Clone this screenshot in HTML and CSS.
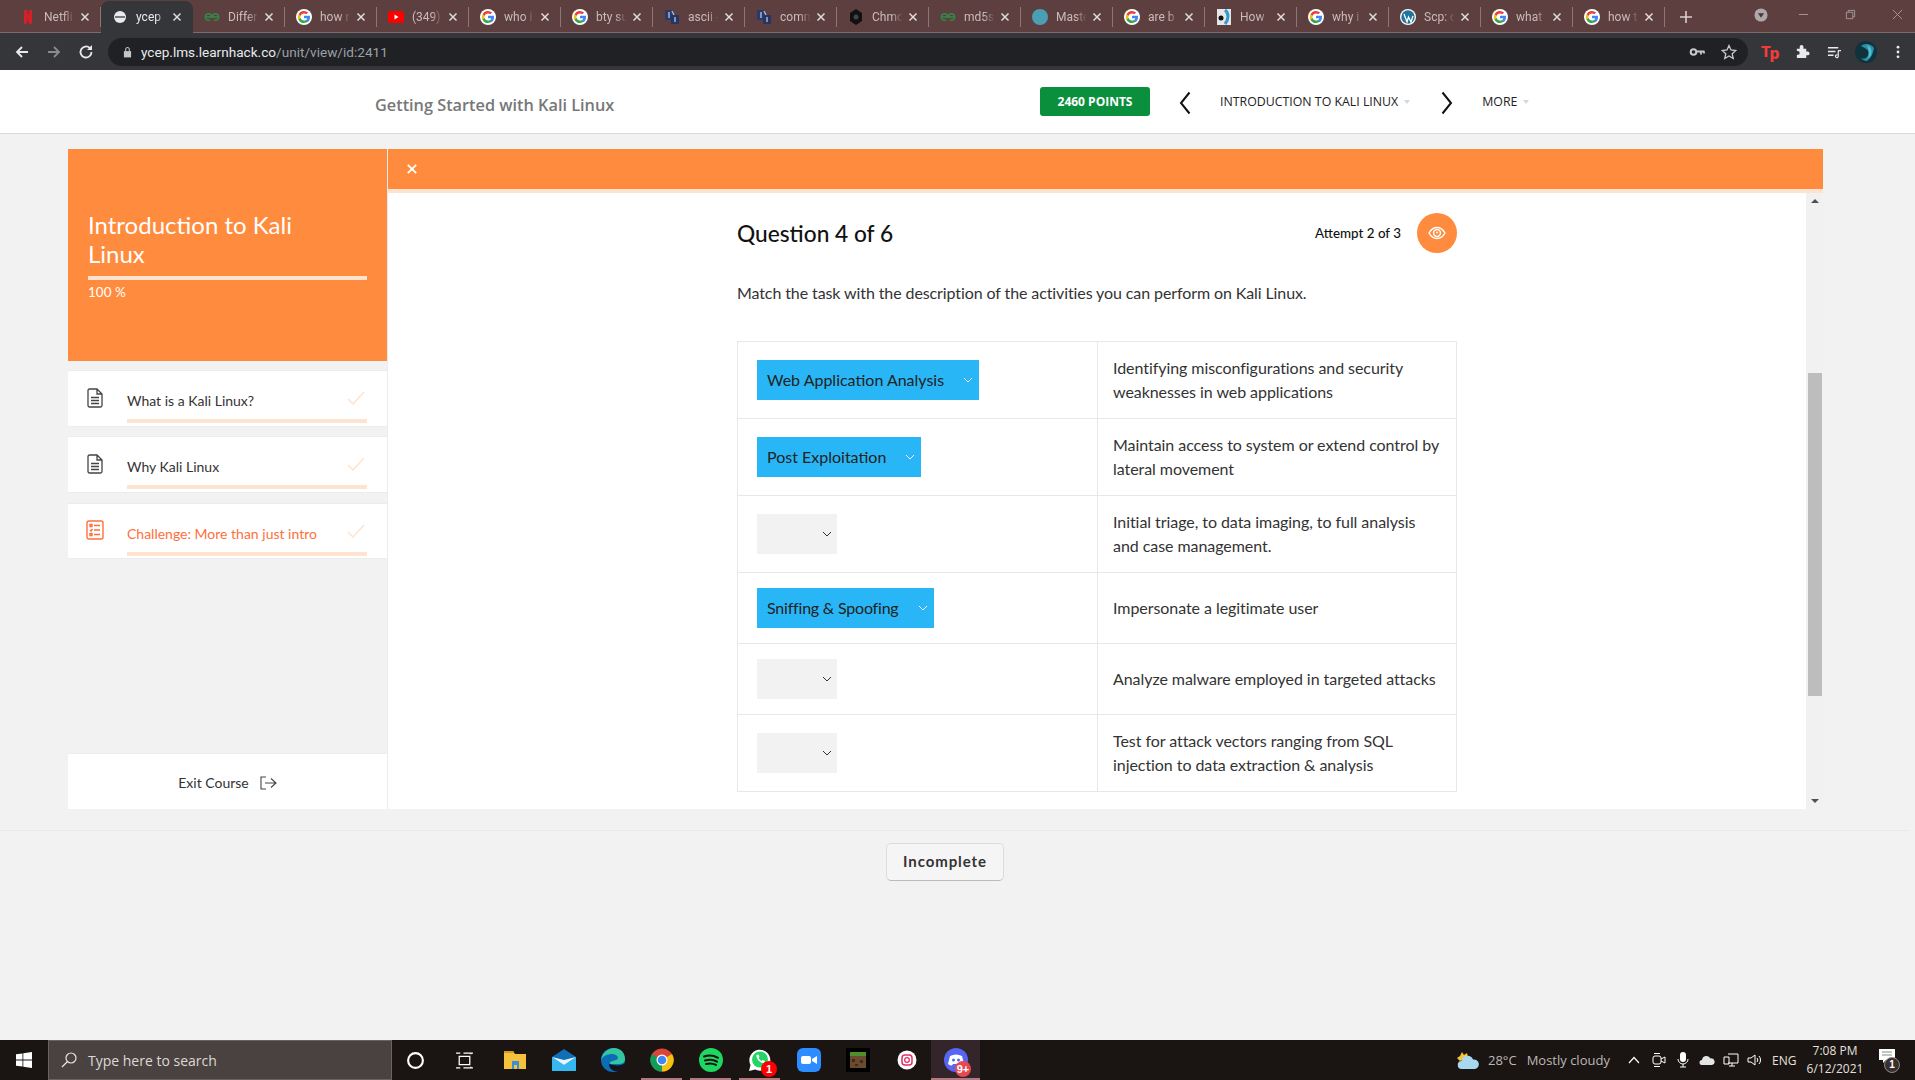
FILE: index.html
```html
<!DOCTYPE html>
<html lang="en">
<head>
  <meta charset="UTF-8" />
  <title>Getting Started with Kali Linux</title>
  <link rel="stylesheet" href="styles.css">
</head>
<body>
  <svg class="defs" width="0" height="0">
    <symbol id="g" viewBox="0 0 24 24">
      <circle cx="12" cy="12" r="12" fill="#fff"/>
      <path d="M21 12.2c0-.7-.1-1.300-.2-1.900H12v3.600h5a4.300 4.300 0 0 1-1.900 2.800v2.300h3C20 17.400 21 15 21 12.200z" fill="#4285f4"/>
      <path d="M12 21c2.500 0 4.600-.8 6.100-2.200l-3-2.300c-.8.600-1.900.9-3.100.9-2.400 0-4.400-1.600-5.100-3.800H3.800v2.400A9 9 0 0 0 12 21z" fill="#34a853"/>
      <path d="M6.900 13.600a5.400 5.400 0 0 1 0-3.400V7.800H3.800a9 9 0 0 0 0 8.200z" fill="#fbbc05"/>
      <path d="M12 6.600c1.300 0 2.500.5 3.500 1.400l2.600-2.600A9 9 0 0 0 3.800 7.800l3.100 2.400C7.600 8.100 9.600 6.600 12 6.600z" fill="#ea4335"/>
    </symbol>
    <symbol id="gfg" viewBox="0 0 16 16">
      <path d="M8 8C7 5 5 4.500 3.500 5S1 7 1.500 9s3 3 4.500 1.500M8 8c1-3 3-3.500 4.500-3s2.500 2 2 4-3 3-4.500 1.500M1.500 8H14.500" fill="none" stroke="#2f8d46" stroke-width="1.400"/>
    </symbol>
    <symbol id="so" viewBox="0 0 16 16">
      <rect x="1" y="1" width="8" height="10" fill="#2b3a67"/>
      <rect x="7" y="6" width="8" height="9" fill="#26355f"/>
      <path d="M5 3v6M11 8v5M8 2l2 4" stroke="#9fb2dc" stroke-width="1.500"/>
    </symbol>
    <symbol id="doc" viewBox="0 0 16 20">
      <path d="M1 2.500A1.500 1.500 0 0 1 2.500 1H10l5 5v11.500a1.500 1.500 0 0 1-1.500 1.500h-11A1.500 1.500 0 0 1 1 17.500zM10 1v5h5M4 9.500h8M4 12.500h8M4 15.500h8" fill="none" stroke="#444" stroke-width="1.300"/>
    </symbol>
    <symbol id="tick" viewBox="0 0 18 14">
      <path d="M1 8l5 5L17 1" fill="none" stroke="#fde3d0" stroke-width="1.500"/>
    </symbol>
    <symbol id="down" viewBox="0 0 10 6">
      <path d="M1 1l4 4 4-4" fill="none" stroke="currentColor" stroke-width="1"/>
    </symbol>
    <symbol id="x" viewBox="0 0 10 10">
      <path d="M1.500 1.500l7 7M8.500 1.500l-7 7" fill="none" stroke="currentColor" stroke-width="1.500"/>
    </symbol>
  </svg>

  <div class="tabstrip">
    <div class="tab"><svg class="fav" viewBox="0 0 16 16"><path d="M4 1h3l2 7V1h3v14l-3-.4L7 8v6.500l-3 .5z" fill="#d81f26"/></svg><span class="tab-name">Netfli</span><svg class="tab-x"><use href="#x"/></svg></div>
    <div class="tab tab-active"><svg class="fav" viewBox="0 0 16 16"><circle cx="8" cy="8" r="6" fill="#e8eaed"/><rect x="3" y="7" width="10" height="2" fill="#777"/></svg><span class="tab-name">ycep</span><svg class="tab-x"><use href="#x"/></svg></div>
    <div class="tab"><svg class="fav"><use href="#gfg"/></svg><span class="tab-name">Differ</span><svg class="tab-x"><use href="#x"/></svg></div>
    <div class="tab"><svg class="fav"><use href="#g"/></svg><span class="tab-name">how r</span><svg class="tab-x"><use href="#x"/></svg></div>
    <div class="tab"><svg class="fav" viewBox="0 0 16 16"><rect x="0" y="2" width="16" height="12" rx="3" fill="#f00"/><path d="M6.500 5.500v5l4-2.500z" fill="#fff"/></svg><span class="tab-name">(349)</span><svg class="tab-x"><use href="#x"/></svg></div>
    <div class="tab"><svg class="fav"><use href="#g"/></svg><span class="tab-name">who i</span><svg class="tab-x"><use href="#x"/></svg></div>
    <div class="tab"><svg class="fav"><use href="#g"/></svg><span class="tab-name">bty su</span><svg class="tab-x"><use href="#x"/></svg></div>
    <div class="tab"><svg class="fav"><use href="#so"/></svg><span class="tab-name">ascii -</span><svg class="tab-x"><use href="#x"/></svg></div>
    <div class="tab"><svg class="fav"><use href="#so"/></svg><span class="tab-name">comm</span><svg class="tab-x"><use href="#x"/></svg></div>
    <div class="tab"><svg class="fav" viewBox="0 0 16 16"><path d="M8 0l6 4v8l-6 4-6-4V4z" fill="#111"/><circle cx="8" cy="8" r="2.500" fill="#444"/></svg><span class="tab-name">Chmo</span><svg class="tab-x"><use href="#x"/></svg></div>
    <div class="tab"><svg class="fav"><use href="#gfg"/></svg><span class="tab-name">md5s</span><svg class="tab-x"><use href="#x"/></svg></div>
    <div class="tab"><svg class="fav" viewBox="0 0 16 16"><circle cx="8" cy="8" r="8" fill="#4b9fb5"/></svg><span class="tab-name">Maste</span><svg class="tab-x"><use href="#x"/></svg></div>
    <div class="tab"><svg class="fav"><use href="#g"/></svg><span class="tab-name">are b</span><svg class="tab-x"><use href="#x"/></svg></div>
    <div class="tab"><svg class="fav" viewBox="0 0 16 16"><rect x="1" y="0" width="14" height="16" fill="#e6e6e6"/><path d="M9 1c4 3 4 9 0 14" fill="none" stroke="#2e9ccf" stroke-width="3"/><circle cx="5" cy="9" r="2.500" fill="#111"/></svg><span class="tab-name">How</span><svg class="tab-x"><use href="#x"/></svg></div>
    <div class="tab"><svg class="fav"><use href="#g"/></svg><span class="tab-name">why i</span><svg class="tab-x"><use href="#x"/></svg></div>
    <div class="tab"><svg class="fav" viewBox="0 0 16 16"><circle cx="8" cy="8" r="8" fill="#fff"/><circle cx="8" cy="8" r="6.700" fill="#21759b"/><path d="M4 5l3 8 1.500-5L11 13l2-6" fill="none" stroke="#fff" stroke-width="1.300"/></svg><span class="tab-name">Scp: c</span><svg class="tab-x"><use href="#x"/></svg></div>
    <div class="tab"><svg class="fav"><use href="#g"/></svg><span class="tab-name">what</span><svg class="tab-x"><use href="#x"/></svg></div>
    <div class="tab"><svg class="fav"><use href="#g"/></svg><span class="tab-name">how t</span><svg class="tab-x"><use href="#x"/></svg></div>
    <svg class="newtab" viewBox="0 0 12 12"><path d="M6 0v12M0 6h12" stroke="#d8cfcf" stroke-width="1.600"/></svg>
    <div class="win-controls">
      <svg class="win-drop" viewBox="0 0 16 16"><circle cx="8" cy="8" r="7.500" fill="#b0a8a8"/><path d="M4.500 6h7L8 11z" fill="#4a3535"/></svg>
      <svg class="win-btn" viewBox="0 0 12 12"><path d="M1 6h10" stroke="#a89a9a"/></svg>
      <svg class="win-btn" viewBox="0 0 12 12"><path d="M1.500 3.500h7v7h-7zM3.500 3.500v-2h7v7h-2" fill="none" stroke="#a89a9a"/></svg>
      <svg class="win-btn" viewBox="0 0 12 12"><path d="M1 1l10 10M11 1L1 11" stroke="#a89a9a"/></svg>
    </div>
  </div>

  <div class="toolbar">
    <svg class="nav-icon" viewBox="0 0 16 16"><path d="M14 8H3M8 3L3 8l5 5" fill="none" stroke="#e8eaed" stroke-width="1.800"/></svg>
    <svg class="nav-icon" viewBox="0 0 16 16"><path d="M2 8h11M8 3l5 5-5 5" fill="none" stroke="#8a8b8d" stroke-width="1.800"/></svg>
    <svg class="nav-icon" viewBox="0 0 16 16"><path d="M13.500 8a5.500 5.500 0 1 1-1.600-3.900" fill="none" stroke="#e8eaed" stroke-width="1.800"/><path d="M14 1v5H9z" fill="#e8eaed"/></svg>
    <div class="omnibox">
      <svg class="lock" viewBox="0 0 10 12"><path d="M1 5h8v7H1z" fill="#c4c7c5"/><path d="M3 5V3a2 2 0 0 1 4 0v2" fill="none" stroke="#c4c7c5" stroke-width="1.200"/></svg>
      <span class="url"><b>ycep.lms.learnhack.co</b>/unit/view/id:2411</span>
      <svg class="omni-icon omni-key" viewBox="0 0 16 16"><circle cx="4.500" cy="8" r="2.800" fill="none" stroke="#c8c9cb" stroke-width="2"/><path d="M7 7.500h8.500M12 7.500v3M15 7.500v2" stroke="#c8c9cb" stroke-width="1.800"/></svg>
      <svg class="omni-icon" viewBox="0 0 16 16"><path d="M8 1.500l2 4.500 4.800.5-3.600 3.200 1 4.800L8 12l-4.200 2.500 1-4.800L1.200 6.500 6 6z" fill="none" stroke="#c8c9cb" stroke-width="1.300"/></svg>
    </div>
    <div class="extensions">
      <div class="ext ext-tp">T<span>p</span></div>
      <div class="ext"><svg viewBox="0 0 16 16"><path d="M2 5h3V3a2 2 0 0 1 4 0v2h3v3h1.500a2 2 0 0 1 0 4H12v3H2v-3.500h1a2 2 0 0 0 0-4H2z" fill="#e8eaed"/></svg></div>
      <div class="ext"><svg viewBox="0 0 16 16"><path d="M1 4h11M1 8h8M1 12h6" stroke="#e8eaed" stroke-width="1.500"/><path d="M12 7v6a1.500 1.500 0 1 1-1-1.400M12 7h3" fill="none" stroke="#e8eaed" stroke-width="1.300"/></svg></div>
      <div class="ext"><svg class="avatar" viewBox="0 0 22 22"><circle cx="11" cy="11" r="11" fill="#10323d"/><path d="M6 5c3-3 10-3 13 2-1 6-3 10-7 13-2 0-5-1-6-3 4 2 7-1 8-5 0-3-4-5-8-7z" fill="#2f8ea3"/><path d="M12 4c3 1 6 5 4 10l-3 4c1-5 1-9-1-14z" fill="#4cc0d4"/></svg></div>
      <div class="ext"><svg class="menu-dots" viewBox="0 0 4 16"><circle cx="2" cy="2.500" r="1.600" fill="#e8eaed"/><circle cx="2" cy="8" r="1.600" fill="#e8eaed"/><circle cx="2" cy="13.500" r="1.600" fill="#e8eaed"/></svg></div>
    </div>
  </div>

  <header class="course-bar">
    <h1 class="course-title">Getting Started with Kali Linux</h1>
    <div class="points">2460 POINTS</div>
    <svg class="unit-arrow unit-prev" viewBox="0 0 12 24"><path d="M10.500 1.500L2 12l8.500 10.500" fill="none" stroke="#111" stroke-width="2"/></svg>
    <span class="unit-link unit-name">INTRODUCTION TO KALI LINUX<i class="caret"></i></span>
    <svg class="unit-arrow unit-next" viewBox="0 0 12 24"><path d="M1.500 1.500L10 12 1.500 22.500" fill="none" stroke="#111" stroke-width="2"/></svg>
    <span class="unit-link">MORE<i class="caret"></i></span>
  </header>

  <div class="course-wrap">
    <aside class="sidebar">
      <div class="unit-card">
        <h2>Introduction to Kali Linux</h2>
        <div class="unit-progress"></div>
        <div class="unit-percent">100 %</div>
      </div>
      <div class="lesson">
        <svg class="lesson-icon"><use href="#doc"/></svg>
        <div class="lesson-body"><span>What is a Kali Linux?</span></div>
        <svg class="lesson-tick"><use href="#tick"/></svg>
      </div>
      <div class="lesson">
        <svg class="lesson-icon"><use href="#doc"/></svg>
        <div class="lesson-body"><span>Why Kali Linux</span></div>
        <svg class="lesson-tick"><use href="#tick"/></svg>
      </div>
      <div class="lesson lesson-current">
        <svg class="lesson-icon" viewBox="0 0 18 20"><path d="M1 3a2 2 0 0 1 2-2h12a2 2 0 0 1 2 2v14a2 2 0 0 1-2 2H3a2 2 0 0 1-2-2zM8 5.500h6M8 10h6M8 14.500h6M4 4.500h2v2H4zM4 13.500h2v2H4zM4 10l1 1 1.500-2" fill="none" stroke="#ff6f3c" stroke-width="1.400"/></svg>
        <div class="lesson-body"><span>Challenge: More than just intro</span></div>
        <svg class="lesson-tick"><use href="#tick"/></svg>
      </div>
      <div class="exit-course">
        <span>Exit Course</span>
        <svg class="exit-icon" viewBox="0 0 17 14"><path d="M6 1H1v12h5M5 7h11M11 2.500L16 7l-5 4.500" fill="none" stroke="#444" stroke-width="1.100"/></svg>
      </div>
    </aside>

    <main class="panel">
      <div class="panel-bar">
        <svg class="panel-close"><use href="#x"/></svg>
      </div>
      <div class="panel-scroll">
        <div class="panel-content">
          <div class="question">
            <div class="question-head">
              <h3>Question 4 of 6</h3>
              <span class="attempt">Attempt 2 of 3</span>
              <div class="eye">
                <svg viewBox="0 0 18 14"><path d="M1 7c2-3.500 5-5.500 8-5.500s6 2 8 5.500c-2 3.500-5 5.500-8 5.500S3 10.500 1 7z" fill="none" stroke="#fff" stroke-width="1.500"/><circle cx="9" cy="7" r="3.400" fill="none" stroke="#fff" stroke-width="1.500"/><circle cx="9" cy="6.500" r="1" fill="#fff"/></svg>
              </div>
            </div>
            <p class="prompt">Match the task with the description of the activities you can perform on Kali Linux.</p>
            <table class="match">
              <tr>
                <td class="match-pick"><div class="pick pick-set">Web Application Analysis<svg class="pick-arrow"><use href="#down"/></svg></div></td>
                <td>Identifying misconfigurations and security weaknesses in web applications</td>
              </tr>
              <tr>
                <td class="match-pick"><div class="pick pick-set">Post Exploitation<svg class="pick-arrow"><use href="#down"/></svg></div></td>
                <td>Maintain access to system or extend control by lateral movement</td>
              </tr>
              <tr>
                <td class="match-pick"><div class="pick"><svg class="pick-arrow"><use href="#down"/></svg></div></td>
                <td>Initial triage, to data imaging, to full analysis and case management.</td>
              </tr>
              <tr>
                <td class="match-pick"><div class="pick pick-set pick-tight">Sniffing &amp; Spoofing<svg class="pick-arrow"><use href="#down"/></svg></div></td>
                <td>Impersonate a legitimate user</td>
              </tr>
              <tr>
                <td class="match-pick"><div class="pick"><svg class="pick-arrow"><use href="#down"/></svg></div></td>
                <td>Analyze malware employed in targeted attacks</td>
              </tr>
              <tr>
                <td class="match-pick"><div class="pick"><svg class="pick-arrow"><use href="#down"/></svg></div></td>
                <td>Test for attack vectors ranging from SQL injection to data extraction &amp; analysis</td>
              </tr>
            </table>
          </div>
        </div>
        <div class="scrollbar">
          <i class="sb-up"></i>
          <div class="sb-track"><div class="sb-thumb"></div></div>
          <i class="sb-down"></i>
        </div>
      </div>
    </main>
  </div>

  <div class="page-foot">
    <button class="incomplete" type="button">Incomplete</button>
  </div>

  <footer class="taskbar">
    <div class="start"><svg viewBox="0 0 16 16"><path d="M0 2.300l6.500-.9v6.200H0zM7.300 1.300L16 0v7.600H7.300zM0 8.400h6.500v6.200L0 13.700zM7.300 8.400H16V16l-8.700-1.200z" fill="#fff"/></svg></div>
    <div class="search">
      <svg viewBox="0 0 16 16"><circle cx="10" cy="6" r="5" fill="none" stroke="#e8e4e2" stroke-width="1.200"/><path d="M6.500 9.500L1 15" stroke="#e8e4e2" stroke-width="1.200"/></svg>
      <span>Type here to search</span>
    </div>
    <div class="task task-sys"><svg viewBox="0 0 18 18"><circle cx="9" cy="9" r="7" fill="none" stroke="#fff" stroke-width="2"/></svg></div>
    <div class="task task-sys task-view"><svg viewBox="0 0 18 18"><path d="M4 5h10v8H4zM1 2h4M8 2h9M1 16h4M8 16h9M1 2v0M15 2v1M15 15v1" fill="none" stroke="#fff" stroke-width="1.200"/></svg></div>
    <div class="task"><svg viewBox="0 0 24 24"><path d="M1 3h9l2 3h11v15H1z" fill="#f5c33b"/><path d="M1 3h9l1 2H1z" fill="#d99a1c"/><path d="M9 13h7v8h-2v-4h-3v4H9z" fill="#3a8fd8"/></svg></div>
    <div class="task"><svg viewBox="0 0 24 24"><path d="M0 9l12-8 12 8v14H0z" fill="#0f6fb8"/><path d="M0 9l12 8 12-8v14H0z" fill="#35b8f2"/><path d="M0 9l12 3 12-3-12 8z" fill="#e9f6fd"/></svg></div>
    <div class="task"><svg viewBox="0 0 24 24"><circle cx="12" cy="12" r="12" fill="#0c6db5"/><path d="M0 12C1 4 8 0 13 0c7 0 11 5 11 11 0 4-3 5-7 5H9c-1-4 8-3 8-6 0-2-3-4-6-4C6 6 2 8 0 12z" fill="#35c5a0"/><path d="M8 16c0 5 5 8 9 7 3-1 6-4 7-8-3 3-10 3-16 1z" fill="#15131c"/></svg></div>
    <div class="task task-open"><svg viewBox="0 0 24 24"><circle cx="12" cy="12" r="11.500" fill="#db4437"/><path d="M12 12L22 6A11.500 11.500 0 0 1 12 23.500z" fill="#f4c20d"/><path d="M12 12L12 23.500A11.500 11.500 0 0 1 2 6z" fill="#0f9d58"/><circle cx="12" cy="12" r="5.500" fill="#fff"/><circle cx="12" cy="12" r="4.300" fill="#4285f4"/></svg></div>
    <div class="task task-open"><svg viewBox="0 0 24 24"><circle cx="12" cy="12" r="12" fill="#1ed760"/><path d="M5 8.500c5-1.500 10-1 14 1.300M6 12.500c4-1.200 9-.8 12 1.100M7 16c3.500-1 7-.7 10 .9" fill="none" stroke="#111" stroke-width="2" stroke-linecap="round"/></svg></div>
    <div class="task task-open"><svg viewBox="0 0 24 24"><path d="M1 23l1.500-6A10.500 10.500 0 1 1 7 21.500z" fill="#fff"/><circle cx="12" cy="11.500" r="8" fill="#25d366"/><path d="M8.500 7c-1 3 4 9 7.500 8l1-2-2.500-1-1 1c-1-.4-2.500-2-3-3l1-1-1-2.500z" fill="#fff"/></svg><b class="task-badge">1</b></div>
    <div class="task"><svg viewBox="0 0 24 24"><rect x="0" y="0" width="24" height="24" rx="6" fill="#2d8cff"/><rect x="4" y="8" width="10" height="8" rx="2" fill="#fff"/><path d="M15 11l5-3v8l-5-3z" fill="#fff"/></svg></div>
    <div class="task"><svg viewBox="0 0 24 24"><rect width="24" height="24" fill="#000"/><rect x="4" y="4" width="16" height="16" fill="#6b4a2e"/><rect x="4" y="4" width="16" height="4" fill="#4d8f2c"/><path d="M6 11h3v3H6zM14 12h3v3h-3zM9 16h3v2H9z" fill="#3f2b1a"/></svg></div>
    <div class="task"><svg viewBox="0 0 24 24"><circle cx="12" cy="12" r="9.500" fill="#fff"/><rect x="7" y="7" width="10" height="10" rx="3" fill="none" stroke="#e1306c" stroke-width="1.500"/><circle cx="12" cy="12" r="2.300" fill="none" stroke="#e1306c" stroke-width="1.300"/></svg></div>
    <div class="task task-open task-focus"><svg viewBox="0 0 24 24"><circle cx="12" cy="12" r="12" fill="#5865f2"/><path d="M6 8c4-2 8-2 12 0l2 8c-1.500 1-3 1.500-4 1.500l-1-1.500H9l-1 1.500c-1 0-2.500-.5-4-1.500z" fill="#fff"/><circle cx="9.500" cy="12" r="1.500" fill="#5865f2"/><circle cx="14.500" cy="12" r="1.500" fill="#5865f2"/></svg><b class="task-badge task-badge-more">9+</b></div>

    <div class="tray">
      <svg class="weather" viewBox="0 0 24 22"><path d="M6 3l2 3 3-2 1 4-8 4-3-3 3-2z" fill="#f7c531"/><path d="M6 20a4 4 0 0 1-.5-8 6 6 0 0 1 11.500-1.500A4.800 4.800 0 0 1 19 20z" fill="#a9d7ee"/></svg>
      <span class="weather-text"><span>28°C</span><span>Mostly cloudy</span></span>
      <svg class="tray-icon tray-chevron" viewBox="0 0 12 8"><path d="M1 7l5-5.500L11 7" fill="none" stroke="#fff" stroke-width="1.200"/></svg>
      <svg class="tray-icon" viewBox="0 0 16 16"><rect x="2" y="4" width="8" height="8" rx="2" fill="none" stroke="#fff"/><path d="M10 7l4-2v6l-4-2M3 1.500h6M3 14.500h6" fill="none" stroke="#fff"/></svg>
      <svg class="tray-icon" viewBox="0 0 16 16"><rect x="5" y="0" width="6" height="10" rx="3" fill="#fff"/><path d="M3 7a5 5 0 0 0 10 0M8 12v3M5 15h6" fill="none" stroke="#fff"/></svg>
      <svg class="tray-icon" viewBox="0 0 16 16"><path d="M3 13a2.500 2.500 0 0 1 0-5 4.500 4.500 0 0 1 8.500-1.500A3.300 3.300 0 0 1 13 13z" fill="#e4e4e4"/></svg>
      <svg class="tray-icon" viewBox="0 0 16 16"><path d="M5 2h10v9H5M1 5h5v7H1zM9 11v3M6 14h6" fill="none" stroke="#fff"/></svg>
      <svg class="tray-icon" viewBox="0 0 16 16"><path d="M1 6h3l4-3v10l-4-3H1zM10 6a3 3 0 0 1 0 4M12 4a6 6 0 0 1 0 8" fill="none" stroke="#fff"/></svg>
      <span class="lang">ENG</span>
      <div class="clock"><span>7:08 PM</span><span>6/12/2021</span></div>
      <div class="notify">
        <svg viewBox="0 0 16 14"><path d="M0 0h16v11H7l-3 3v-3H0z" fill="#fff"/><path d="M3 3h10M3 6h10" stroke="#888"/></svg>
        <b>1</b>
      </div>
    </div>
  </footer>
</body>
</html>
```

FILE: styles.css
```css
* {
  box-sizing: border-box;
}
html, body {
  margin: 0;
  height: 1080px;
  overflow: hidden;
}
body {
  display: flex;
  flex-direction: column;
  background: #f2f2f2;
  color: #222;
  font-family: "Lato", sans-serif;
}
.defs {
  display: none;
}

/* browser chrome */
.tabstrip {
  flex: 0 0 33px;
  display: flex;
  align-items: stretch;
  padding: 1px 0 0 9px;
  background: #5e3f3f;
  border-bottom: 1px solid #7d6a6a;
  font-family: "Roboto", sans-serif;
}
.tab {
  flex: 0 0 91.66px;
  display: flex;
  align-items: center;
  padding: 0 11px;
  color: #c9bcbc;
  font-size: 12px;
  position: relative;
}
.tab::after {
  content: "";
  position: absolute;
  right: 0;
  top: 6px;
  height: 20px;
  width: 1px;
  background: #8c7777;
}
.tab-active {
  margin-bottom: -1px;
  background: #35363a;
  color: #e8eaed;
  border-radius: 8px 8px 0 0;
}
.tab-active::after {
  display: none;
}
.fav {
  flex: none;
  width: 16px;
  height: 16px;
}
.tab-name {
  flex: none;
  width: 36px;
  margin-left: 8px;
  overflow: hidden;
  white-space: nowrap;
  -webkit-mask-image: linear-gradient(90deg, #000 55%, transparent 85%);
  mask-image: linear-gradient(90deg, #000 55%, transparent 85%);
}
.tab-x {
  flex: none;
  width: 10px;
  height: 10px;
  margin-left: auto;
  color: #ddd;
}
.newtab {
  width: 12px;
  height: 12px;
  margin: 10px 0 0 15px;
}
.win-controls {
  margin-left: auto;
  display: flex;
  align-items: center;
  padding: 0 12px 4px 0;
}
.win-drop {
  width: 14px;
  height: 14px;
  margin-right: -6px;
}
.win-btn {
  width: 11px;
  height: 11px;
  margin-left: 36px;
}

.toolbar {
  flex: 0 0 37px;
  display: flex;
  align-items: center;
  padding-left: 14px;
  background: #35363a;
}
.nav-icon {
  width: 16px;
  height: 16px;
  margin-right: 16px;
}
.omnibox {
  width: 1640px;
  height: 28px;
  margin-left: -2px;
  display: flex;
  align-items: center;
  padding: 0 11px 0 15px;
  background: #202124;
  border-radius: 14px;
}
.lock {
  width: 9px;
  height: 12px;
}
.url {
  margin-left: 9px;
  font-family: "Roboto", sans-serif;
  font-size: 13.6px;
  color: #9aa0a6;
}
.url b {
  font-weight: 400;
  color: #e8eaed;
}
.omni-icon {
  width: 16px;
  height: 16px;
  margin-left: 16px;
}
.omni-key {
  margin-left: auto;
}
.extensions {
  display: flex;
  margin-left: 6px;
}
.ext {
  width: 32px;
  height: 24px;
  display: flex;
  align-items: center;
  justify-content: center;
}
.ext svg {
  width: 15px;
  height: 15px;
}
.ext-tp {
  color: #f23b3b;
  font: 800 15px "Inter", sans-serif;
}
.ext-tp span {
  position: relative;
  top: 2px;
  margin-left: -1px;
}
.ext .avatar {
  width: 22px;
  height: 22px;
}
.ext .menu-dots {
  width: 4px;
  height: 14px;
}

/* course header */
.course-bar {
  flex: 0 0 64px;
  display: flex;
  align-items: center;
  padding-left: 375px;
  background: #fff;
  border-bottom: 1px solid #d6dcde;
  font-family: "Open Sans", sans-serif;
}
.course-title {
  width: 665px;
  margin: 7px 0 0;
  font-size: 16.3px;
  font-weight: 600;
  color: #777;
}
.points {
  width: 110px;
  height: 29px;
  line-height: 29px;
  background: #0a8f3c;
  border-radius: 3px;
  color: #fff;
  font-size: 12px;
  font-weight: 700;
  text-align: center;
}
.unit-arrow {
  width: 12px;
  height: 24px;
  margin-top: 3px;
}
.unit-prev {
  margin-left: 29px;
}
.unit-next {
  margin-left: 31px;
}
.unit-link {
  font-size: 12.35px;
  color: #222;
  white-space: nowrap;
}
.unit-name {
  margin-left: 29px;
}
.unit-next + .unit-link {
  margin-left: 29px;
}
.caret {
  display: inline-block;
  margin-left: 6px;
  vertical-align: 2px;
  border: 3px solid transparent;
  border-top: 4px solid #d4d8da;
  border-bottom: 0;
}

/* course area */
.course-wrap {
  flex: 0 0 661px;
  display: flex;
  margin-top: 15px;
  padding: 0 92px 0 68px;
}
.sidebar {
  flex: 0 0 319px;
  display: flex;
  flex-direction: column;
  height: 660px;
}
.unit-card {
  height: 212px;
  padding: 61px 20px 0 20px;
  background: #ff8b3e;
  color: #fff;
}
.unit-card h2 {
  margin: 0;
  max-width: 240px;
  font-size: 24px;
  font-weight: 400;
  line-height: 29px;
}
.unit-progress {
  height: 4px;
  margin-top: 8px;
  background: #fde3d0;
}
.unit-percent {
  margin-top: 4px;
  font-size: 13.5px;
  line-height: 16px;
}
.lesson {
  height: 57px;
  margin-top: 9px;
  display: flex;
  padding: 17px 22px 0 19px;
  background: #fff;
  border-top: 1px solid #ececec;
  border-bottom: 1px solid #ececec;
  font-size: 14px;
  color: #333;
}
.lesson-icon {
  flex: none;
  width: 16px;
  height: 20px;
}
.lesson-body {
  flex: 1;
  height: 35px;
  margin-left: 24px;
  padding-top: 4px;
  border-bottom: 4px solid #fde3d0;
  line-height: 18px;
}
.lesson-tick {
  flex: none;
  width: 18px;
  height: 14px;
  margin: 3px 0 0 -20px;
}
.lesson-current {
  margin-top: 10px;
  height: 56px;
  color: #ff6f3c;
}
.lesson-current .lesson-icon {
  width: 18px;
  margin: -1px -1px 0;
}
.exit-course {
  margin-top: auto;
  height: 56px;
  display: flex;
  align-items: center;
  justify-content: center;
  gap: 11px;
  padding-top: 2px;
  background: #fff;
  border-top: 1px solid #ececec;
  font-size: 14px;
  color: #333;
}
.exit-icon {
  width: 17px;
  height: 14px;
}

.panel {
  flex: 0 0 1436px;
  height: 660px;
  display: flex;
  flex-direction: column;
  background: #fff;
  border-left: 1px solid #ececec;
}
.panel-bar {
  flex: 0 0 44px;
  display: flex;
  align-items: center;
  padding-left: 18px;
  background: #ff8b3e;
  border-bottom: 4px solid #fde3d0;
  color: #fff;
}
.panel-close {
  width: 12px;
  height: 12px;
}
.panel-scroll {
  flex: 1;
  display: flex;
  min-height: 0;
}
.panel-content {
  flex: 1;
  display: flex;
  justify-content: center;
}
.question {
  width: 720px;
  padding-top: 20px;
}
.question-head {
  display: flex;
  align-items: center;
  height: 40px;
}
.question-head h3 {
  margin: 0 auto 0 0;
  font-size: 22.7px;
  font-weight: 500;
  color: #111;
}
.attempt {
  font-size: 13.4px;
  font-weight: 500;
  color: #111;
}
.eye {
  width: 40px;
  height: 40px;
  margin-left: 16px;
  display: flex;
  align-items: center;
  justify-content: center;
  background: #ff8b3e;
  border-radius: 50%;
}
.eye svg {
  width: 18px;
  height: 14px;
}
.prompt {
  margin: 28px 0 36px;
  font-size: 16px;
  line-height: 24px;
  letter-spacing: -.1px;
  color: #333;
}
.match {
  width: 720px;
  table-layout: fixed;
  border-collapse: collapse;
  font-size: 16px;
  line-height: 24px;
  letter-spacing: -.06px;
  color: #333;
}
.match td {
  padding: 14px 13px 14px 15px;
  border: 1px solid #e8e8e8;
  vertical-align: middle;
}
.match .match-pick {
  width: 360px;
  padding: 15px 19px;
}
.pick {
  display: flex;
  align-items: center;
  justify-content: flex-end;
  width: fit-content;
  min-width: 80px;
  height: 40px;
  padding: 0 5px 0 10px;
  background: #f2f2f2;
  color: #222;
  letter-spacing: 0;
}
.pick-arrow {
  width: 10px;
  height: 6px;
  color: #333;
}
.pick-set {
  background: #29b6f6;
  gap: 19px;
  padding-right: 6px;
}
.pick-set .pick-arrow {
  color: #fff;
}
.pick-tight {
  letter-spacing: -.2px;
}

.scrollbar {
  flex: 0 0 17px;
  display: flex;
  flex-direction: column;
  align-items: center;
  background: #f1f1f1;
}
.sb-up, .sb-down {
  width: 0;
  height: 0;
  border-left: 4px solid transparent;
  border-right: 4px solid transparent;
  margin-top: 6px;
}
.sb-up {
  border-bottom: 4px solid #505050;
  flex-basis: 4px;
}
.sb-down {
  border-top: 4px solid #505050;
  flex-basis: 4px;
  margin-bottom: 6px;
}
.sb-track {
  flex: 1;
  width: 100%;
  padding: 170px 1px 0 2px;
}
.sb-thumb {
  height: 323px;
  background: #bdbdbd;
}

.page-foot {
  flex: 0 0 210px;
  display: flex;
  justify-content: center;
  align-items: flex-start;
  margin-right: 6px;
  padding: 12px 19px 0 0;
  margin-top: 20px;
  border-top: 1px solid #e8e8e8;
}
.incomplete {
  width: 118px;
  height: 38px;
  padding: 0 0 2px;
  background: #f5f5f5;
  border: 1px solid #dcdcdc;
  border-bottom-color: #bbb;
  border-radius: 5px;
  font-family: "Lato", sans-serif;
  font-size: 15px;
  font-weight: 700;
  letter-spacing: .9px;
  color: #333;
}

/* taskbar */
.taskbar {
  position: absolute;
  left: 0;
  right: 0;
  bottom: 0;
  height: 40px;
  display: flex;
  background: #1a1413;
  color: #e4e0de;
  font-family: "Open Sans", sans-serif;
}
.start {
  flex: 0 0 48px;
  display: flex;
  align-items: center;
  justify-content: center;
}
.start svg {
  width: 16px;
  height: 16px;
}
.search {
  flex: 0 0 344px;
  display: flex;
  align-items: center;
  padding-left: 12px;
  background: #4a4240;
  border: 1px solid #6a6361;
  font-size: 14px;
  color: #ddd8d5;
}
.search svg {
  width: 16px;
  height: 16px;
}
.search span {
  margin-left: 11px;
}
.task {
  flex: 0 0 49px;
  display: flex;
  align-items: center;
  justify-content: center;
  position: relative;
}
.task svg {
  width: 24px;
  height: 24px;
}
.task-sys svg {
  width: 19px;
  height: 19px;
  margin-right: 2px;
}
.task-open::after {
  content: "";
  position: absolute;
  left: 4px;
  right: 4px;
  bottom: 0;
  height: 2px;
  background: #b07a80;
}
.task-focus {
  background: #33252a;
}
.task-focus::after {
  left: 0;
  right: 0;
}
.task-badge {
  position: absolute;
  right: 7px;
  bottom: 3px;
  width: 16px;
  height: 16px;
  border-radius: 50%;
  background: #f00;
  color: #fff;
  font: 700 11px/16px "Liberation Sans", sans-serif;
  text-align: center;
}
.task-badge-more {
  background: #e8484f;
  right: 9px;
}
.tray {
  flex: 1;
  display: flex;
  align-items: center;
  justify-content: flex-end;
  padding-right: 18px;
  font-size: 12px;
}
.weather {
  width: 24px;
  height: 22px;
}
.weather-text {
  width: 140px;
  margin-left: 8px;
  display: flex;
  gap: 10px;
  font-size: 13px;
  color: #bdb8b6;
}
.tray-icon {
  width: 16px;
  height: 16px;
  margin-right: 8px;
}
.tray-chevron {
  width: 12px;
  height: 8px;
  margin-right: 11px;
}
.lang {
  margin-left: 1px;
  width: 37px;
}
.clock {
  width: 52px;
  display: flex;
  flex-direction: column;
  align-items: center;
  line-height: 18px;
}
.notify {
  width: 18px;
  height: 22px;
  margin-left: 18px;
  position: relative;
}
.notify svg {
  width: 16px;
  height: 14px;
}
.notify b {
  position: absolute;
  right: -3px;
  bottom: -2px;
  width: 16px;
  height: 16px;
  border-radius: 50%;
  background: #3a2f2d;
  border: 1px solid #888;
  color: #fff;
  font: 700 10px/14px "Liberation Sans", sans-serif;
  text-align: center;
}
```
